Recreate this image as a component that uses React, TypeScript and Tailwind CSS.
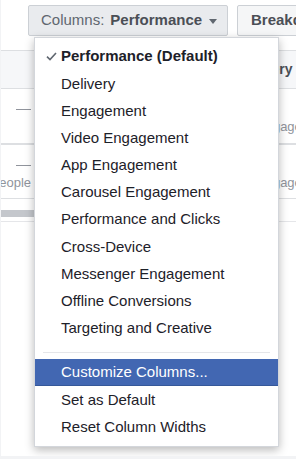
import React from "react";

const items = [
  "Delivery",
  "Engagement",
  "Video Engagement",
  "App Engagement",
  "Carousel Engagement",
  "Performance and Clicks",
  "Cross-Device",
  "Messenger Engagement",
  "Offline Conversions",
  "Targeting and Creative",
];

export default function App() {
  return (
    <div className="w-[296px] h-[459px] bg-[#f2f3f5] pl-[1px] pb-[3px] font-['Liberation_Sans',Arial,sans-serif]">
      <div className="relative h-full bg-white overflow-hidden">
        {/* toolbar */}
        <div className="flex pt-[5px] pl-[27px] gap-[9px] whitespace-nowrap">
          <div className="flex items-center h-[31px] w-[200px] shrink-0 pl-[12px] bg-[#e9ebee] border border-[#ccd0d5] rounded-[2px] text-[15px]">
            <span className="text-[#606770]">Columns:</span>
            <span className="ml-[6px] font-bold text-[#4b4f56]">Performance</span>
            <svg width="8" height="5" viewBox="0 0 8 5" className="ml-[7px] mt-[1px]">
              <path d="M0 0h8L4 5z" fill="#606770" />
            </svg>
          </div>
          <div className="flex items-center h-[31px] shrink-0 pl-[13px] pr-[12px] bg-[#f5f6f7] border border-[#ccd0d5] rounded-[2px] text-[15px] font-bold text-[#4b4f56]">
            Breakdown
          </div>
        </div>

        {/* table */}
        <div className="mt-[14px] border-t border-[#dddfe2]">
          <div className="flex h-[38px] bg-[#f6f7f9] border-b border-[#dddfe2]">
            <div className="w-[32px] shrink-0" />
            <div className="flex-1" />
            <div className="w-[50px] shrink-0 overflow-hidden whitespace-nowrap flex items-center text-[14px] font-bold text-[#4b4f56]">
              <span className="ml-[-8px] shrink-0">Delivery</span>
            </div>
          </div>
          <div className="flex h-[54px]">
            <div className="w-[32px] shrink-0 pt-[13px] flex flex-col items-end pr-[2px]">
              <div className="h-[14px] flex items-center">
                <div className="w-[15px] h-[1px] bg-[#90949c]" />
              </div>
            </div>
            <div className="flex-1" />
            <div className="w-[50px] shrink-0 overflow-hidden whitespace-nowrap pl-[11px] pt-[13px] text-[13px] text-[#90949c]">
              <div className="h-[14px]" />
              <div className="h-[18px] leading-[18px] mt-[2px]">Engagement</div>
            </div>
          </div>
          <div className="h-[2px] bg-[#dddfe2]" />
          <div className="flex h-[54px] border-b border-[#dddfe2]">
            <div className="w-[32px] shrink-0 pt-[13px] overflow-hidden flex flex-col items-end pr-[2px]">
              <div className="h-[14px] flex items-center">
                <div className="w-[15px] h-[1px] bg-[#90949c]" />
              </div>
              <div className="h-[18px] leading-[18px] mt-[2px] w-full flex justify-end whitespace-nowrap text-[13px] text-[#90949c]">
                <span className="shrink-0">People</span>
              </div>
            </div>
            <div className="flex-1" />
            <div className="w-[50px] shrink-0 overflow-hidden whitespace-nowrap pl-[11px] pt-[13px] text-[13px] text-[#90949c]">
              <div className="h-[14px]" />
              <div className="h-[18px] leading-[18px] mt-[2px]">Engagement</div>
            </div>
          </div>
          <div className="mt-[11px] h-[7px] w-[220px] bg-[#c4c7cc]" />
          <div className="mt-[4px] h-[1px] bg-[#e5e6e9]" />
        </div>

        {/* dropdown menu */}
        <div className="absolute left-[33px] top-[37px] w-[245px] bg-white border border-[#d3d6db] shadow-[0_3px_9px_rgba(0,0,0,0.28)] py-[5px] text-[15px] text-[#1d2129] whitespace-nowrap">
          <div className="relative h-[27.2px] flex items-center pl-[26px] font-bold">
            <svg width="11" height="9" viewBox="0 0 11 9" className="absolute left-[11px] top-[9px]">
              <path d="M1 4.6 L4 7.6 L10 1" fill="none" stroke="#606770" strokeWidth="1.6" />
            </svg>
            Performance (Default)
          </div>
          {items.map((t) => (
            <div key={t} className="h-[27.2px] flex items-center pl-[26px]">
              {t}
            </div>
          ))}
          <div className="mx-[8px] mt-[10px] mb-[6px] h-[1px] bg-[#e5e6e9]" />
          <div className="h-[27.2px] flex items-center pl-[26px] bg-[#4267b2] text-white border-b border-[#365899]">
            Customize Columns...
          </div>
          <div className="h-[27.2px] flex items-center pl-[26px]">Set as Default</div>
          <div className="h-[27.2px] flex items-center pl-[26px]">Reset Column Widths</div>
        </div>
      </div>
    </div>
  );
}
